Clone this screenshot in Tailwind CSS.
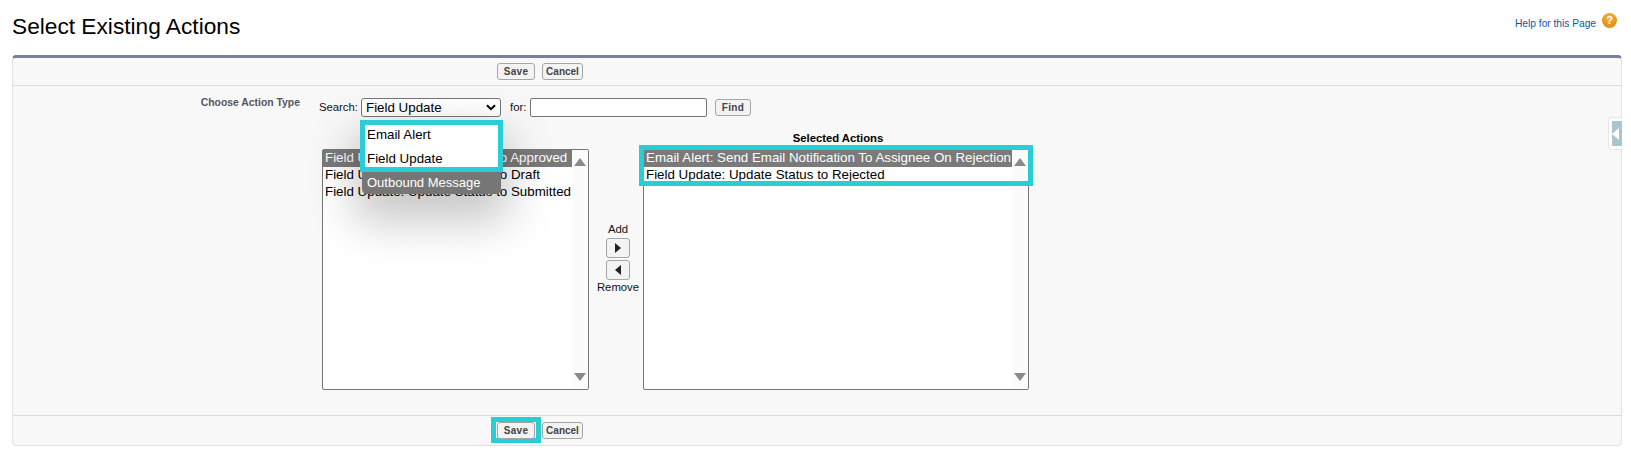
<!DOCTYPE html>
<html>
<head>
<meta charset="utf-8">
<script src="https://cdn.jsdelivr.net/npm/@tailwindcss/browser@4"></script>
</head>
<body class="bg-white font-['Liberation_Sans',Arial,sans-serif] text-black overflow-hidden">
<div class="w-[1631px] h-[452px] overflow-hidden pl-3 pr-[9px]">
  <!-- Title -->
  <div class="flex justify-between h-[55px]">
    <h1 class="text-[22.7px] leading-[28px] pt-[12px] text-black">Select Existing Actions</h1>
    <div class="flex items-start gap-[6px] pt-[13px] pr-[5px]">
      <a class="text-[10.2px] leading-[14px] mt-[4px] text-[#015ba7]">Help for this Page</a>
      <span class="w-[15px] h-[15px] rounded-full bg-[radial-gradient(circle_at_50%_30%,#fbb33a,#d87f0a)] text-white text-[11px] leading-[15px] font-bold text-center">?</span>
    </div>
  </div>

  <!-- Panel -->
  <div class="relative h-[391px] bg-[#f8f8f8] border-t-[3px] border-[#7a7f9e] border-x border-x-[#e0e3e5] border-b border-b-[#e0e3e5] rounded-t-[4px] rounded-b-[4px]">
    <!-- Top buttons -->
    <div class="flex items-center h-[28px] pl-[484px] gap-[7px] border-b border-[#dbdbdb]">
      <button class="h-[17px] w-[38px] border border-[#a5a5a5] rounded-[3px] bg-[#f3f3f3] text-[10px] tracking-[0.3px] font-bold text-[#444]">Save</button>
      <button class="h-[17px] w-[41px] border border-[#a5a5a5] rounded-[3px] bg-[#f3f3f3] text-[10px] font-bold text-[#444]">Cancel</button>
    </div>

    <!-- Body -->
    <div class="relative h-[329px]">
      <!-- Search row -->
      <div class="flex h-[45px] pt-[12px]">
        <div class="w-[287px] -mt-[1px] text-right text-[10.4px] leading-[12px] font-bold text-[#55555f]">Choose Action Type</div>
        <div class="flex items-start pl-[19px]">
          <span class="text-[11.3px] leading-[19px] text-[#111] w-[42px]">Search:</span>
          <div class="w-[140px] h-[19px] border border-[#767676] rounded-[3px] bg-white text-[13.33px] leading-[19px] pl-[4px] flex justify-between items-center pr-[4px]">
            <span>Field Update</span>
            <svg class="w-[10px] h-[7px]" viewBox="0 0 10 7"><path d="M1 1.2 L5 5.2 L9 1.2" fill="none" stroke="#000" stroke-width="2"/></svg>
          </div>
          <span class="text-[11.3px] leading-[19px] text-[#111] ml-[9px] w-[20px]">for:</span>
          <div class="w-[177px] h-[19px] border border-[#767676] rounded-[2px] bg-white"></div>
          <button class="ml-[8px] mt-[1px] h-[17px] w-[36px] border border-[#a5a5a5] rounded-[3px] bg-[#f3f3f3] text-[10px] tracking-[0.3px] font-bold text-[#444]">Find</button>
        </div>
      </div>

      <!-- Lists -->
      <div class="flex pl-[309px]">
        <div class="w-[267px]">
          <div class="h-[18px] text-center text-[11.3px] leading-[14px] font-bold">Available Actions</div>
          <div class="relative h-[241px] border border-[#767676] rounded-[2px] bg-white flex">
            <div class="flex-1 text-[13.33px] leading-[17px]">
              <div class="bg-[#7a7a7a] text-white pl-[2px] h-[17px] leading-[16px]">Field Update: Update Status to Approved</div>
              <div class="pl-[2px] h-[17px] leading-[16px]">Field Update: Update Status to Draft</div>
              <div class="pl-[2px] h-[17px] leading-[16px]">Field Update: Update Status to Submitted</div>
            </div>
            <div class="w-[16px] flex flex-col justify-between items-center pt-[8px] pb-[8px] bg-[#fbfbfb]">
              <span class="w-0 h-0 border-x-[6px] border-x-transparent border-b-[8px] border-b-[#8a8a8a]"></span>
              <span class="w-0 h-0 border-x-[6px] border-x-transparent border-t-[8px] border-t-[#8a8a8a]"></span>
            </div>
          </div>
        </div>

        <div class="w-[54px] flex flex-col items-center pt-[91px] pl-[4px] text-[11.3px] leading-[14px] text-[#111]">
          <span>Add</span>
          <button class="mt-[2px] w-[24px] h-[20px] shrink-0 border border-[#a5a5a5] rounded-[3px] bg-[#f3f3f3] flex items-center justify-center">
            <span class="w-0 h-0 border-y-[5px] border-y-transparent border-l-[6px] border-l-[#222]"></span>
          </button>
          <button class="mt-[2px] w-[24px] h-[20px] shrink-0 border border-[#a5a5a5] rounded-[3px] bg-[#f3f3f3] flex items-center justify-center">
            <span class="w-0 h-0 border-y-[5px] border-y-transparent border-r-[6px] border-r-[#222]"></span>
          </button>
          <span>Remove</span>
        </div>

        <div class="w-[386px]">
          <div class="h-[18px] pl-[4px] text-center text-[11.3px] leading-[14px] font-bold">Selected Actions</div>
          <div class="relative h-[241px] border border-[#767676] rounded-[2px] bg-white flex">
            <div class="flex-1 text-[13.33px]">
              <div class="bg-[#7a7a7a] text-white pl-[2px] h-[17px] leading-[16px]">Email Alert: Send Email Notification To Assignee On Rejection</div>
              <div class="pl-[2px] h-[17px] leading-[16px]">Field Update: Update Status to Rejected</div>
            </div>
            <div class="w-[16px] flex flex-col justify-between items-center pt-[8px] pb-[8px] bg-[#fbfbfb]">
              <span class="w-0 h-0 border-x-[6px] border-x-transparent border-b-[8px] border-b-[#8a8a8a]"></span>
              <span class="w-0 h-0 border-x-[6px] border-x-transparent border-t-[8px] border-t-[#8a8a8a]"></span>
            </div>
            <div class="absolute left-[-5px] top-[-5px] w-[394px] h-[41px] border-[5px] border-[#28cdd6]"></div>
          </div>
        </div>
      </div>

      <!-- Dropdown popup -->
      <div class="absolute left-[349px] top-[34px] w-[139px] h-[74px] bg-[#767676] rounded-b-[5px] shadow-[0_20px_45px_8px_rgba(0,0,0,0.22)]">
        <div class="absolute left-[-2px] top-0 w-[143px] h-[52px] border-[5px] border-[#28cdd6] bg-white text-[13.33px] text-black">
          <div class="h-[23px] pl-[2px] leading-[20px]">Email Alert</div>
          <div class="h-[19px] pl-[2px] leading-[22px]">Field Update</div>
        </div>
        <div class="absolute left-[5px] top-[52px] text-[13px] leading-[22px] text-white">Outbound Message</div>
      </div>

      <!-- Side tab -->
      <div class="absolute right-[-1px] top-[31px] w-[14px] h-[33px] bg-white rounded-l-[4px] border border-r-0 border-[#e6e6e6] pl-[3px] pt-[3px]">
        <div class="w-full h-[25px] bg-[#a8c5d0] flex items-center">
          <span class="w-0 h-0 border-y-[6px] border-y-transparent border-r-[7px] border-r-white"></span>
        </div>
      </div>
    </div>

    <!-- Footer -->
    <div class="relative flex items-center h-[30px] pl-[484px] gap-[7px] border-t border-[#dbdbdb]">
      <div class="absolute left-[478px] top-[1px] w-[50px] h-[26px] border-[5px] border-[#28cdd6]"></div>
      <button class="relative h-[17px] w-[38px] border border-[#a5a5a5] rounded-[3px] bg-[#f3f3f3] text-[10px] tracking-[0.3px] font-bold text-[#444]">Save</button>
      <button class="h-[17px] w-[41px] border border-[#a5a5a5] rounded-[3px] bg-[#f3f3f3] text-[10px] font-bold text-[#444]">Cancel</button>
    </div>
  </div>
</div>
</body>
</html>
